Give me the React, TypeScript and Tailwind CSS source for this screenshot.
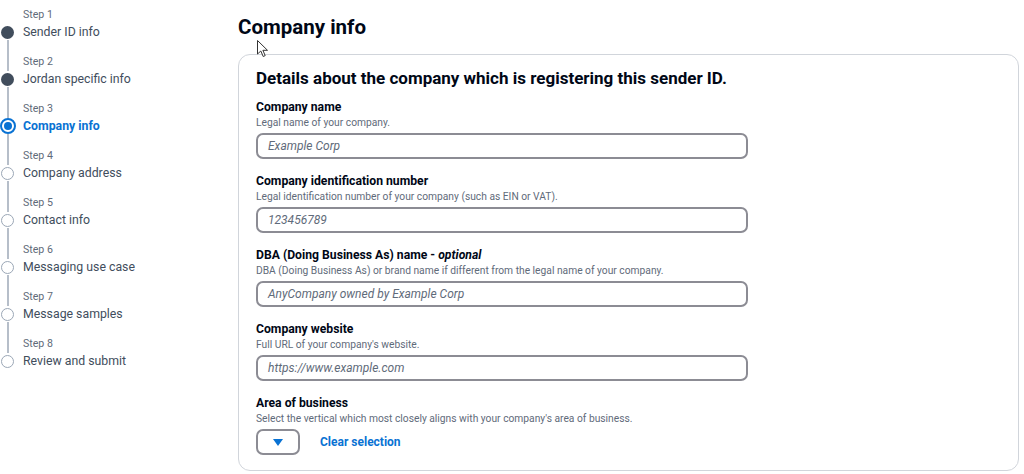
import React from "react";

const steps = [
  "Sender ID info",
  "Jordan specific info",
  "Company info",
  "Company address",
  "Contact info",
  "Messaging use case",
  "Message samples",
  "Review and submit",
];

function Circle({ state }: { state: "done" | "active" | "todo" }) {
  if (state === "done")
    return <div className="w-[13px] h-[13px] rounded-full bg-[#414d5c]" />;
  if (state === "active")
    return (
      <div className="w-[16px] h-[16px] rounded-full border-[2px] border-[#0972d3] flex items-center justify-center">
        <div className="w-[8px] h-[8px] rounded-full bg-[#0972d3]" />
      </div>
    );
  return <div className="w-[13px] h-[13px] rounded-full border-[1.5px] border-[#9ba7b6]" />;
}

function Sidebar() {
  return (
    <div className="w-[238px] shrink-0 pt-[6px]">
      {steps.map((s, i) => {
        const state = i < 2 ? "done" : i === 2 ? "active" : "todo";
        return (
          <div key={s} className="flex h-[47px]">
            <div className="w-[15px] flex flex-col items-center">
              <div className={`w-[2px] h-[18px] ${i > 0 ? "bg-[#b6bec9]" : ""}`} />
              <div className="h-[16px] flex items-center justify-center">
                <Circle state={state} />
              </div>
              <div className={`w-[2px] flex-1 ${i < steps.length - 1 ? "bg-[#b6bec9]" : ""}`} />
            </div>
            <div className="pl-[8px]">
              <div className="h-[16px] leading-[16px] text-[10.6px] text-[#5f6b7a] pt-[1px]">Step {i + 1}</div>
              <div
                className={`h-[20px] leading-[20px] text-[12.3px] ${
                  state === "active" ? "text-[#0972d3] font-bold" : "text-[#414d5c]"
                }`}
              >
                {s}
              </div>
            </div>
          </div>
        );
      })}
    </div>
  );
}

function Field({
  label,
  optional,
  desc,
  placeholder,
}: {
  label: string;
  optional?: boolean;
  desc: string;
  placeholder: string;
}) {
  return (
    <div className="flex flex-col">
      <div className="h-[16px] leading-[16px] text-[12.2px] font-bold text-[#000716]">
        {label}
        {optional && (
          <>
            {" - "}
            <i>optional</i>
          </>
        )}
      </div>
      <div className="mt-[1px] h-[14px] leading-[14px] text-[10.25px] text-[#5f6b7a]">{desc}</div>
      <div className="mt-[3px] w-[492px] h-[26px] rounded-[7px] border-[2px] border-[#8c8c94] flex items-center pl-[10px] text-[12px] italic text-[#5f6b7a]">
        {placeholder}
      </div>
    </div>
  );
}

export default function App() {
  return (
    <div
      className="w-[1024px] h-[474px] bg-white flex overflow-hidden relative"
      style={{ fontFamily: "Roboto, 'Open Sans', sans-serif" }}
    >
      <Sidebar />
      <div className="flex-1 pr-[5px] pt-[13px]">
        <h1 className="h-[28px] leading-[28px] text-[20.5px] font-bold text-[#000716]">Company info</h1>
        <div className="mt-[13px] w-[781px] rounded-[12px] border border-[#d1d5db] pl-[17px] pt-[12px] pb-[15px]">
          <h2 className="h-[22px] leading-[22px] text-[17px] font-bold text-[#000716]">
            Details about the company which is registering this sender ID.
          </h2>
          <div className="mt-[10px] flex flex-col gap-[14px]">
            <Field label="Company name" desc="Legal name of your company." placeholder="Example Corp" />
            <Field
              label="Company identification number"
              desc="Legal identification number of your company (such as EIN or VAT)."
              placeholder="123456789"
            />
            <Field
              label="DBA (Doing Business As) name"
              optional
              desc="DBA (Doing Business As) or brand name if different from the legal name of your company."
              placeholder="AnyCompany owned by Example Corp"
            />
            <Field
              label="Company website"
              desc="Full URL of your company's website."
              placeholder="https://www.example.com"
            />
            <div className="flex flex-col">
              <div className="h-[16px] leading-[16px] text-[12.2px] font-bold text-[#000716]">Area of business</div>
              <div className="mt-[1px] h-[14px] leading-[14px] text-[10.25px] text-[#5f6b7a]">
                Select the vertical which most closely aligns with your company's area of business.
              </div>
              <div className="mt-[3px] flex items-center">
                <div className="w-[44px] h-[26px] rounded-[7px] border-[2px] border-[#8c8c94] flex items-center justify-center">
                  <svg width="10" height="7" viewBox="0 0 10 7">
                    <path d="M0 0 H10 L5 7 Z" fill="#0972d3" />
                  </svg>
                </div>
                <span className="ml-[20px] text-[12px] font-bold text-[#0972d3]">Clear selection</span>
              </div>
            </div>
          </div>
        </div>
      </div>
      <svg className="absolute left-[257px] top-[40px]" width="12" height="18" viewBox="0 0 12 18">
        <path d="M0.5 0.5 L0.5 14 L3.8 11 L6.2 16.5 L8.2 15.6 L5.9 10.3 L10.5 10.3 Z" fill="white" stroke="#333" strokeWidth="1" />
      </svg>
    </div>
  );
}
